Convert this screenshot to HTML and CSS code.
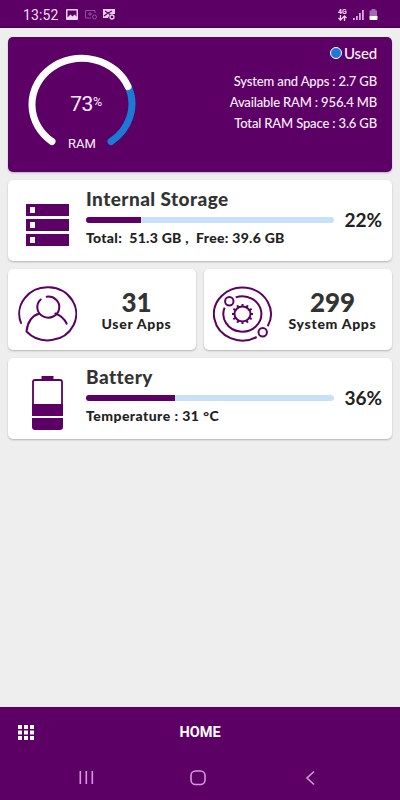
FILE: index.html
```html
<!doctype html>
<html lang="en">
  <head>
    <meta charset="UTF-8" />
    <meta name="viewport" content="width=device-width, initial-scale=1.0" />
    <title>Device Info</title>
    <link rel="stylesheet" href="styles.css">
  </head>
  <body>
    <header class="status-bar">
      <span class="clock">13:52</span>
      <svg class="notifications" width="50" height="12" viewBox="0 0 50 12">
        <path fill="#f0d5f2" fill-rule="evenodd" d="M1 0h10q1 0 1 1v9q0 1-1 1H1q-1 0-1-1V1q0-1 1-1zM1.500 1.500v7l3-3 2 2 2-2 2 2v-6z" />
        <g fill="none" stroke="#91509a">
          <path d="M25 9h-5.500V1.500H29V4M22 5h4M24 3v4" />
          <circle cx="28.500" cy="8" r="2" />
        </g>
        <path fill="#ead0ed" d="M37 0h12v5h-5L42 9h-5z" />
        <path fill="none" stroke="#5c0065" stroke-width="1.200" d="M39 2l3 2 4-2M38 7l4-3 3 2" />
        <circle cx="46" cy="8" r="2" fill="#5c0065" stroke="#ead0ed" stroke-width="1.300" />
      </svg>
      <div class="network">
        <span>4G</span>
        <svg width="9" height="6" viewBox="0 0 9 6" fill="none" stroke="#f0d5f2" stroke-width="1.300">
          <path d="M2.500 0v5M.5 3l2 2 2-2M6.500 6V1M4.500 3l2-2 2 2" />
        </svg>
      </div>
      <svg class="signal" width="12" height="12" viewBox="0 0 12 12" fill="#d9acdf">
        <path d="M0 9h1.800v2H0zM3 7h1.800v4H3zM6 4h1.800v7H6zM9 1h1.800v10H9z" />
      </svg>
      <svg class="charge" width="9" height="12" viewBox="0 0 9 12">
        <path fill="#a66bae" d="M2.500 0h4v1.500h1.500v5.500H.5V1.500h2z" />
        <path fill="#fff" d="M.5 7h8v3q0 1-1 1h-6q-1 0-1-1z" />
      </svg>
    </header>

    <main class="content">
      <section class="card ram">
        <div class="gauge">
          <svg width="110" height="96" viewBox="0 0 110 96" fill="none" stroke-width="7" stroke-linecap="round">
            <path stroke="#1c7ad5" d="M102.500 34A50 46.200 0 0 1 85 88.500" />
            <path stroke="#fff" d="M26 88.500A50 46.200 0 1 1 102 33.500" />
          </svg>
          <div class="gauge-value">73<sup>%</sup></div>
          <div class="gauge-label">RAM</div>
        </div>
        <div class="ram-info">
          <div class="legend"><i class="dot"></i>Used</div>
          <p>System and Apps : 2.7 GB</p>
          <p>Available RAM : 956.4 MB</p>
          <p>Total RAM Space : 3.6 GB</p>
        </div>
      </section>

      <section class="card meter">
        <svg class="meter-icon" width="77" height="81" viewBox="0 0 77 81">
          <path fill="#5c0065" fill-rule="evenodd" d="M18 24h43v12H18zM22 27v6h5v-6zM18 39h43v12H18zM22 42v6h5v-6zM18 54h43v12H18zM22 57v6h5v-6z" />
        </svg>
        <div class="meter-body">
          <h2>Internal Storage</h2>
          <div class="bar"><div class="fill" style="width: 22%"></div></div>
          <p class="storage-detail">Total:&nbsp; 51.3 GB ,&nbsp; Free: 39.6 GB</p>
        </div>
        <strong class="percent">22%</strong>
      </section>

      <div class="apps">
        <section class="card app">
          <svg width="60" height="56" viewBox="0 0 60 56" fill="none" stroke="#5c0065" stroke-width="2" stroke-linecap="round">
            <path d="M4 37A28.500 26.500 0 1 1 9.500 45.500Q11 31 22.300 27.500" />
            <path d="M23.700 13.500A11 10.500 0 1 0 29.700 10.700M38.300 27.500Q46 30 49.700 37.700" />
          </svg>
          <div class="app-text">
            <strong>31</strong>
            <span>User Apps</span>
          </div>
        </section>
        <section class="card app">
          <svg width="60" height="56" viewBox="0 0 60 56" fill="none" stroke="#5c0065" stroke-width="2">
            <path d="M43.700 51A28.500 26.500 0 1 1 54.700 40.300" />
            <path d="M22.700 11.400A19 17.700 0 1 1 11.600 21.700" />
            <circle cx="16.300" cy="15.300" r="4.200" />
            <circle cx="49.700" cy="46.300" r="4.200" />
            <g transform="translate(0 -.5)">
              <ellipse cx="29.500" cy="28.500" rx="8" ry="7.500" />
              <path d="M29.500 21v-2.500M29.500 36v2.500M21.500 28.500H19M37.500 28.500H40M25.500 22l-1.300-2.300M33.500 22l1.300-2.300M22.600 24.700l-2.300-1.300M36.400 24.700l2.300-1.300M22.600 32.300l-2.300 1.300M36.400 32.300l2.300 1.300M25.500 35l-1.300 2.300M33.500 35l1.300 2.300" />
            </g>
          </svg>
          <div class="app-text">
            <strong>299</strong>
            <span>System Apps</span>
          </div>
        </section>
      </div>

      <section class="card meter">
        <svg class="meter-icon" width="77" height="81" viewBox="0 0 77 81">
          <path fill="#5c0065" d="M33.500 18h12v4h-12zM24 46h31v12H24zM24 60h31v9q0 3-3 3H27q-3 0-3-3z" />
          <path fill="none" stroke="#5c0065" stroke-width="1.800" d="M25 47V24q0-2 2-2h25q2 0 2 2v23" />
        </svg>
        <div class="meter-body">
          <h2>Battery</h2>
          <div class="bar"><div class="fill" style="width: 36%"></div></div>
          <p>Temperature : 31 °C</p>
        </div>
        <strong class="percent">36%</strong>
      </section>
    </main>

    <footer class="bottom">
      <div class="tab-bar">
        <svg width="16" height="15" viewBox="0 0 16 15" fill="#fff">
          <path d="M0 0h4v4H0zM6 0h4v4H6zM12 0h4v4h-4zM0 5.500h4v4H0zM6 5.500h4v4H6zM12 5.500h4v4h-4zM0 11h4v4H0zM6 11h4v4H6zM12 11h4v4h-4z" />
        </svg>
        <span>HOME</span>
      </div>
      <svg class="nav-keys" width="400" height="44" viewBox="0 0 400 44" fill="none" stroke="#d796df" stroke-width="1.600">
        <path d="M80.300 15v13M86.300 15v13M92.300 15v13M314 15.500l-7 6.500 7 6.500" />
        <rect x="191" y="15" width="14" height="13.500" rx="4.500" />
      </svg>
    </footer>
  </body>
</html>
```

FILE: styles.css
```css
* {
  box-sizing: border-box;
}

body {
  margin: 0;
  height: 800px;
  display: flex;
  flex-direction: column;
  overflow: hidden;
  background: #eeeeee;
  color: #222;
  font-family: Lato, "Liberation Sans", sans-serif;
}

h2,
p {
  margin: 0;
}

.status-bar {
  display: flex;
  align-items: center;
  height: 28px;
  padding: 2px 22px 0 23px;
  background: #5c0065;
  border-bottom: 1px solid #480050;
  color: #f5dff7;
  font-family: Roboto, sans-serif;
}

.clock {
  width: 43px;
  font-size: 14px;
  letter-spacing: 0.1px;
}

.network {
  display: flex;
  flex-direction: column;
  align-items: center;
  margin-left: auto;
  font-size: 7px;
  line-height: 6px;
  font-weight: bold;
}

.signal {
  margin: 0 4px 0 6px;
}

.content {
  flex: 1;
  display: flex;
  flex-direction: column;
  gap: 8px;
  padding: 9px 8px 0;
}

.card {
  background: #fff;
  border-radius: 5px;
  box-shadow: 0 1px 2px rgba(0, 0, 0, 0.25);
}

.ram {
  display: flex;
  justify-content: space-between;
  height: 135px;
  padding: 16px 15px 0 18px;
  background: #5c0065;
  color: #fbf0fc;
}

.gauge {
  display: grid;
  width: 110px;
  height: 96px;
  justify-items: center;
  font-family: Roboto, sans-serif;
}

.gauge > * {
  grid-area: 1 / 1;
}

.gauge-value {
  padding: 38px 0 0 10px;
  font-size: 21px;
  line-height: 26px;
  letter-spacing: -0.4px;
}

.gauge-value sup {
  font-size: 12.5px;
  line-height: 0;
  vertical-align: 5px;
}

.gauge-label {
  padding: 82px 0 0 2px;
  font-size: 13px;
  line-height: 18px;
}

.ram-info {
  font-size: 13px;
  line-height: 21px;
  font-weight: 500;
  letter-spacing: -0.15px;
  text-align: right;
}

.legend {
  display: flex;
  align-items: center;
  justify-content: flex-end;
  gap: 2px;
  height: 18px;
  margin: -9px 0 9px;
  font-size: 15px;
}

.dot {
  width: 12px;
  height: 12px;
  border: 1.5px solid #fff;
  border-radius: 50%;
  background: #1c7ad5;
}

.meter {
  display: flex;
  height: 81px;
}

.meter-body {
  width: 249px;
  padding: 7px 0 0 1px;
}

.meter h2 {
  font-size: 19px;
  line-height: 24px;
  font-weight: 900;
  letter-spacing: 0.45px;
  color: #333;
}

.bar {
  height: 6px;
  margin: 6px 0;
  overflow: hidden;
  border-radius: 3px;
  background: #c7e2f8;
}

.fill {
  height: 100%;
  background: #5c0065;
}

.meter p {
  font-size: 14px;
  line-height: 17px;
  font-weight: 900;
  letter-spacing: 0.45px;
}

.meter .storage-detail {
  letter-spacing: 0.28px;
}

.percent {
  margin-left: auto;
  padding: 28px 10px 0 0;
  font-size: 19px;
  line-height: 24px;
}

.apps {
  display: grid;
  grid-template-columns: 1fr 1fr;
  gap: 8px;
}

.app {
  display: flex;
  height: 81px;
  padding: 17px 0 0 9px;
}

.app-text {
  display: flex;
  flex: 1;
  flex-direction: column;
  align-items: center;
}

.app-text strong {
  font-size: 26px;
  line-height: 32px;
  font-weight: 900;
  color: #333;
}

.app-text span {
  margin-top: -3px;
  font-size: 14px;
  line-height: 17px;
  font-weight: 900;
  letter-spacing: 0.7px;
}

.bottom {
  height: 93px;
  background: #5c0065;
  color: #fff;
}

.tab-bar {
  display: grid;
  grid-template-columns: 1fr auto 1fr;
  align-items: center;
  height: 49px;
  padding: 2px 18px 0;
  font: bold 14.5px/18px Roboto, sans-serif;
}

.nav-keys {
  display: block;
}
```
